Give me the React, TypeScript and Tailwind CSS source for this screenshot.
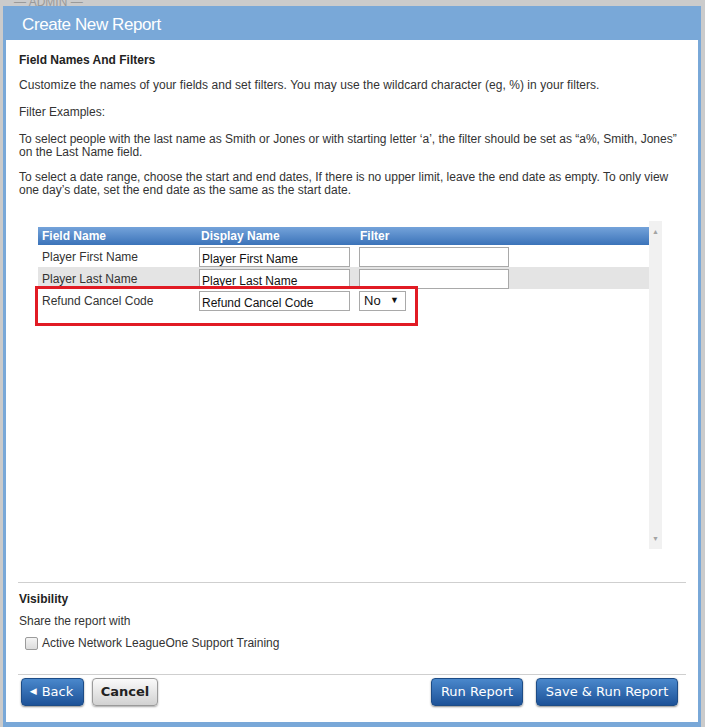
import React from "react";

const bodyFont = { fontFamily: '"Liberation Sans", Arial, sans-serif' };
const btnFont = { fontFamily: '"DejaVu Sans", "Lucida Grande", sans-serif' };

interface FieldRow {
  name: string;
  display: string;
  filter: "text" | "select";
  shaded?: boolean;
}

const rows: FieldRow[] = [
  { name: "Player First Name", display: "Player First Name", filter: "text" },
  { name: "Player Last Name", display: "Player Last Name", filter: "text", shaded: true },
  { name: "Refund Cancel Code", display: "Refund Cancel Code", filter: "select" },
];

function BlueButton({ children, className = "" }: { children: React.ReactNode; className?: string }) {
  return (
    <button
      style={btnFont}
      className={`flex h-[28px] items-center justify-center rounded-[4px] border border-[#1d4c86] bg-gradient-to-b from-[#4a88cc] to-[#1d5298] text-[13px] text-white shadow-[0_1px_2px_rgba(0,0,0,0.45)] ${className}`}
    >
      {children}
    </button>
  );
}

export default function App() {
  return (
    <div style={bodyFont} className="h-[727px] w-[705px] overflow-hidden bg-[#cbcbcb]">
      {/* page behind the dialog */}
      <div className="h-[6px] overflow-hidden pl-[14px]">
        <div className="-mt-[7px] text-[12px] text-[#9a9a9a]">— ADMIN —</div>
      </div>

      {/* Dialog */}
      <div className="ml-[3px] w-[698px] bg-[#79a8d8] pb-[5px]">
        <div className="flex h-[34px] items-center pl-[19px] pt-[3px]">
          <h1 className="text-[17px] tracking-[-0.4px] text-white">Create New Report</h1>
        </div>

        <div className="mx-[3px] h-[682px] bg-white px-[12px] text-[12px] text-[#333]">
          <div className="pl-[1px] pt-[13px]">
            <h2 className="font-bold leading-[14px] text-[#222]">Field Names And Filters</h2>
            <p className="mt-[11px] leading-[14px] tracking-[0.05px]">
              Customize the names of your fields and set filters. You may use the wildcard character (eg, %) in your filters.
            </p>
            <p className="mt-[13px] leading-[14px]">Filter Examples:</p>
            <p className="mt-[14px] leading-[13px]">
              To select people with the last name as Smith or Jones or with starting letter ‘a’, the filter should be set as “a%, Smith, Jones”
              <br />
              on the Last Name field.
            </p>
            <p className="mt-[12px] leading-[13px]">
              To select a date range, choose the start and end dates, If there is no upper limit, leave the end date as empty. To only view
              <br />
              one day’s date, set the end date as the same as the start date.
            </p>
          </div>

          {/* Field table */}
          <div className="relative ml-[20px] mt-[24px] flex h-[328px] w-[624px]">
            <div className="w-[611px] pt-[6px]">
              <div className="flex h-[18px] items-center bg-gradient-to-b from-[#74a3da] to-[#3b73b9] font-bold text-white">
                <div className="w-[162px] pl-[4px]">Field Name</div>
                <div className="w-[159px] pl-[1px]">Display Name</div>
                <div className="pl-[1px]">Filter</div>
              </div>
              {rows.map((row) => (
                <div key={row.name} className={`flex h-[22px] ${row.shaded ? "bg-[#e4e4e4]" : "bg-white"}`}>
                  <div className="w-[161px] pl-[4px] pt-[5px] leading-[14px]">{row.name}</div>
                  <div className="w-[160px] pt-[2px]">
                    <div className="h-[20px] w-[151px] overflow-hidden border border-[#a9a9a9] bg-white pl-[2px] pt-[4px] leading-[14px] text-[#111]">
                      {row.display}
                    </div>
                  </div>
                  <div className="pt-[2px]">
                    {row.filter === "text" ? (
                      <div className="h-[20px] w-[150px] border border-[#a9a9a9] bg-white" />
                    ) : (
                      <div className="flex h-[20px] w-[47px] items-center justify-between border border-[#a9a9a9] bg-white pl-[4px] pr-[6px] text-[13px] text-[#111]">
                        <span>No</span>
                        <span className="text-[9px]">▼</span>
                      </div>
                    )}
                  </div>
                </div>
              ))}
            </div>

            {/* scrollbar */}
            <div className="flex w-[13px] flex-col items-center justify-between bg-[#f1f1f1] py-[7px] text-[7px] leading-none text-[#a3a3a3]">
              <span>▲</span>
              <span>▼</span>
            </div>

            {/* highlight annotation */}
            <div className="absolute left-[-3px] top-[65px] h-[40px] w-[383px] border-[3px] border-[#e11b24]" />
          </div>

          <div className="mt-[33px] h-px bg-[#cfcfcf]" />

          <div className="pl-[1px]">
            <h3 className="mt-[9px] font-bold leading-[14px] text-[#222]">Visibility</h3>
            <p className="mt-[8px] leading-[14px]">Share the report with</p>
            <label className="mt-[8px] flex items-center gap-[4px] pl-[6px] leading-[14px]">
              <span className="h-[13px] w-[13px] rounded-[2px] border border-[#9b9b9b] bg-gradient-to-b from-[#f4f4f4] to-[#dcdcdc]" />
              <span>Active Network LeagueOne Support Training</span>
            </label>
          </div>

          <div className="mt-[24px] h-px bg-[#cfcfcf]" />

          <div className="mt-[3px] flex items-center pl-[3px] pr-[8px]">
            <BlueButton className="w-[63px] gap-[5px] pr-[2px]">
              <span className="text-[9px]">◀</span>
              <span>Back</span>
            </BlueButton>
            <button
              style={btnFont}
              className="ml-[8px] h-[28px] w-[66px] rounded-[4px] border border-[#9a9a9a] bg-gradient-to-b from-[#fafafa] to-[#d2d2d2] text-[13px] font-bold text-[#222] shadow-[0_1px_2px_rgba(0,0,0,0.35)]"
            >
              Cancel
            </button>
            <div className="flex-1" />
            <BlueButton className="w-[92px]">Run Report</BlueButton>
            <BlueButton className="ml-[13px] w-[142px]">Save &amp; Run Report</BlueButton>
          </div>
        </div>
      </div>
    </div>
  );
}
